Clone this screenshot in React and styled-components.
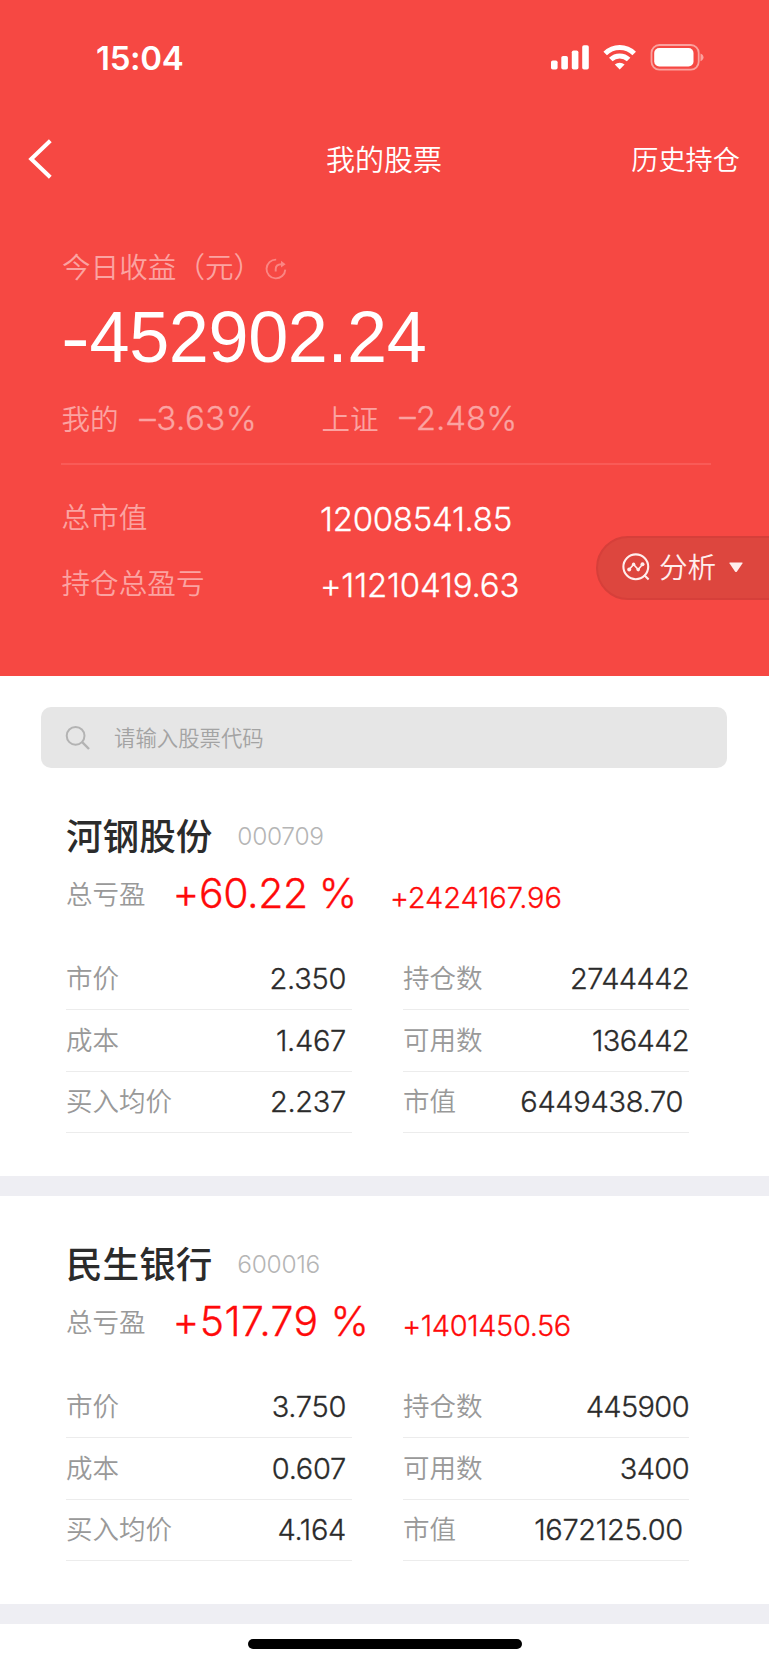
import React from 'react';
import styled, { createGlobalStyle } from 'styled-components';

const GlobalStyle = createGlobalStyle`
  * {
    box-sizing: border-box;
  }
  body {
    margin: 0;
    background: #fff;
    font-family: 'Noto Sans CJK SC', sans-serif;
    font-weight: 350;
  }
`;

const Page = styled.div`
  width: 769px;
  height: 1665px;
  overflow: hidden;
  display: flex;
  flex-direction: column;
  background: #fff;
`;

const Header = styled.header`
  position: relative;
  height: 676px;
  background: #f64843;
  color: #fff;
`;

const StatusBar = styled.div`
  height: 115px;
  padding: 0 64px 0 96px;
  display: flex;
  align-items: center;
  justify-content: space-between;
`;

const Num = styled.span`
  font-family: Inter, sans-serif;
  font-size: ${p => p.$size}px;
  font-weight: ${p => p.$weight || 300};
  letter-spacing: ${p => p.$spacing || 0}px;
  -webkit-text-stroke: ${p => (p.$weight ? 0 : 0.3)}px currentColor;
  white-space: pre;
`;

const NavBar = styled.nav`
  height: 88px;
  padding: 0 29px 0 28px;
  display: grid;
  grid-template-columns: 1fr auto 1fr;
  align-items: center;
`;

const Title = styled.h1`
  margin: -3px 0 0;
  font-size: 29px;
  font-weight: 350;
`;

const HistoryLink = styled.span`
  justify-self: end;
  margin-top: -3px;
  font-size: 27.2px;
`;

const Summary = styled.section`
  padding: 43px 58px 0 61px;
`;

const Caption = styled.div`
  display: flex;
  align-items: center;
  height: 40px;
  padding-left: 1px;
  font-size: 28.6px;
  line-height: 38px;
  color: #fba3a1;

  svg {
    margin: 6px 0 0 3px;
  }
`;

const Today = styled.div`
  margin-top: 11px;
  height: 80px;
  font-family: 'Liberation Sans', sans-serif;
  font-size: 72px;
  font-weight: 400;
  line-height: 80px;
  letter-spacing: -0.4px;
`;

const Minus = styled.span`
  display: inline-block;
  margin-right: 5px;
  transform: scaleX(1.2);
  transform-origin: 0 50%;
`;

const Pair = styled.div`
  display: grid;
  grid-template-columns: 260px 1fr;
`;

const Rate = styled.div`
  display: flex;
  align-items: center;
  height: 40px;
  margin-top: 21px;
  padding-left: 0.5px;
  gap: 20.5px;
  font-size: 28.6px;
  line-height: 38px;
  color: #fba3a1;
`;

const Divider = styled.div`
  height: 2px;
  margin: 25px 0 20px;
  background: #f95b57;
`;

const Total = styled(Pair)`
  height: 66px;
  align-items: center;

  ${Num} {
    margin: 2px 0 0 -1px;
  }
`;

const TotalLabel = styled.span`
  margin: -5px 0 0 0.5px;
  font-size: 28.6px;
  color: #fba3a1;
`;

const AnalyseButton = styled.button`
  position: absolute;
  top: 536px;
  right: -2px;
  width: 175px;
  height: 64px;
  padding: 0 0 0 24px;
  display: flex;
  align-items: center;
  border: 2px solid #d63f3a;
  border-radius: 32px 0 0 32px;
  background: #dd463e;
  color: #ffeeed;
  font: 350 28.6px/58px 'Noto Sans CJK SC', sans-serif;

  svg:first-child {
    margin-top: -2px;
  }

  span {
    margin: -4px 13px 0 9px;
  }

  svg:last-child {
    margin-top: -2px;
  }
`;

const SearchBox = styled.div`
  flex: none;
  display: flex;
  align-items: center;
  height: 61px;
  margin: 31px 42px 0 41px;
  padding: 0 24px;
  border-radius: 10px;
  background: #e6e6e6;
  color: #a3a3a3;
  font-size: 21.4px;
  line-height: 58px;

  span {
    margin: -2px 0 0 24px;
  }
`;

const Stock = styled.section`
  flex: none;
  height: 428px;
  padding: 38px 79px 0 66px;
  border-bottom: 20px solid #eeeef3;
`;

const NameRow = styled.div`
  display: flex;
  align-items: center;
  height: 60px;
  gap: 25px;
  color: #b5b5b5;
`;

const Name = styled.h2`
  margin: -4px 0 0;
  font-size: 36.6px;
  font-weight: 500;
  color: #2b2b2b;
`;

const Label = styled.span`
  font-size: 26.5px;
  color: #999;
`;

const ProfitRow = styled.div`
  display: flex;
  align-items: baseline;
  height: 56px;
  line-height: 54px;
  color: #ff0a0a;

  ${Label} {
    align-self: flex-start;
  }
`;

const Percent = styled(Num)`
  margin: 0 33px 0 27px;
`;

const Facts = styled.div`
  display: grid;
  grid-template-columns: 286px 286px;
  column-gap: 51px;
  margin-top: 26.5px;
`;

const Fact = styled.div`
  display: flex;
  align-items: center;
  justify-content: space-between;
  height: 61.6px;
  padding-right: ${p => p.$end}px;
  border-bottom: 1px solid #ececec;
  color: #2b2b2b;

  ${Label} {
    margin-top: -4px;
  }
`;

const HomeBar = styled.div`
  flex: none;
  width: 274px;
  height: 10px;
  margin: 15px auto 0;
  border-radius: 5px;
  background: #000;
`;

const StatusIcons = () => (
  <svg width="155" height="28" viewBox="0 0 155 28" fill="#fff">
    <rect x="1" y="16.5" width="6.6" height="9" rx="1.8" />
    <rect x="11.3" y="12" width="6.6" height="13.5" rx="1.8" />
    <rect x="21.8" y="6.5" width="6.6" height="19" rx="1.8" />
    <rect x="32.2" y="1.2" width="6.6" height="24.3" rx="1.8" />
    <g fill="none" stroke="#fff" strokeWidth="5">
      <path d="M55.2 9.6 A20.5 20.5 0 0 1 84.2 9.6" />
      <path d="M60.8 15.6 A12.6 12.6 0 0 1 78.6 15.6" />
    </g>
    <path d="M69.7 25.5 L64.8 20.6 A7.3 7.3 0 0 1 74.6 20.6 Z" />
    <rect x="101.5" y="1" width="47.2" height="24.6" rx="7.8" fill="none" stroke="#fba19e" strokeWidth="1.8" />
    <rect x="104.2" y="4.1" width="39.3" height="18.4" rx="5" />
    <path d="M150.5 9.4 Q153.5 10.6 153.5 13.3 Q153.5 16 150.5 17.2 Z" fill="#fba19e" />
  </svg>
);

const BackIcon = () => (
  <svg width="26" height="42" viewBox="0 0 26 42" fill="none" stroke="#fff" strokeWidth="4">
    <path d="M22.3 2.7 L3.2 21 L22.3 39.3" />
  </svg>
);

const RefreshIcon = () => (
  <svg width="22" height="22" viewBox="0 0 22 22" fill="none" stroke="#fa8683" strokeWidth="1.9">
    <path d="M11.2 1.6 A9.4 9.4 0 1 0 20.3 11.6" />
    <path d="M10.7 13.4 V11 C10.7 7.8 12.8 6.3 16.4 6.2" />
    <path d="M16 2.8 L20.6 6.2 L16 9.4 Z" fill="#fa8683" stroke="none" />
  </svg>
);

const AnalyseIcon = () => (
  <svg width="28" height="28" viewBox="0 0 28 28" fill="none" stroke="#ffeeed" strokeWidth="2.1">
    <circle cx="13.8" cy="13.8" r="12.4" />
    <path d="M22.2 22 L26.6 26.4" />
    <path d="M7.2 16.4 L11.6 11.4 L16.2 16.6 L20.4 11.4" strokeWidth="1.6" />
    <g fill="#ffeeed" stroke="none">
      <circle cx="7.2" cy="16.4" r="2" />
      <circle cx="11.6" cy="11.2" r="1.7" />
      <circle cx="16.2" cy="16.6" r="1.8" />
      <circle cx="20.5" cy="11.2" r="2" />
    </g>
  </svg>
);

const CaretIcon = () => (
  <svg width="14" height="11" viewBox="0 0 14 11" fill="#ffeeed">
    <path d="M1 0.5 H13 Q14 0.6 13.4 1.6 L8 9.4 Q7 10.4 6 9.4 L0.6 1.6 Q0 0.6 1 0.5 Z" />
  </svg>
);

const SearchIcon = () => (
  <svg width="25" height="25" viewBox="0 0 25 25" fill="none" stroke="#b3b3b3" strokeWidth="2">
    <circle cx="10.6" cy="10.8" r="8.9" />
    <path d="M17.2 17.2 L24 24" strokeWidth="2.4" />
  </svg>
);

const stocks = [
  {
    name: '河钢股份',
    code: '000709',
    percent: '+60.22 %',
    profit: '+2424167.96',
    spacing: [-0.4, -0.1],
    facts: [
      ['市价', '2.350'],
      ['持仓数', '2744442'],
      ['成本', '1.467'],
      ['可用数', '136442'],
      ['买入均价', '2.237'],
      ['市值', '6449438.70'],
    ],
  },
  {
    name: '民生银行',
    code: '600016',
    percent: '+517.79 %',
    profit: '+1401450.56',
    spacing: [0.4, -0.4],
    facts: [
      ['市价', '3.750'],
      ['持仓数', '445900'],
      ['成本', '0.607'],
      ['可用数', '3400'],
      ['买入均价', '4.164'],
      ['市值', '1672125.00'],
    ],
  },
];

// the right column sits flush, except for the market value
const factEnd = i => (i % 2 === 0 || i === 5 ? 6 : 0);

const StockCard = ({ name, code, percent, profit, spacing, facts }) => (
  <Stock>
    <NameRow>
      <Name>{name}</Name>
      <Num $size={24.5} $weight={300} $spacing={-0.3}>{code}</Num>
    </NameRow>
    <ProfitRow>
      <Label>总亏盈</Label>
      <Percent $size={41} $spacing={spacing[0]}>{percent}</Percent>
      <Num $size={29} $spacing={spacing[1]}>{profit}</Num>
    </ProfitRow>
    <Facts>
      {facts.map(([label, value], i) => (
        <Fact key={label} $end={factEnd(i)}>
          <Label>{label}</Label>
          <Num $size={29} $spacing={value.includes('.') ? -0.3 : -0.6}>{value}</Num>
        </Fact>
      ))}
    </Facts>
  </Stock>
);

const App = () => {
  return (
    <Page>
      <GlobalStyle />
      <Header>
        <StatusBar>
          <Num $size={33} $weight={600} $spacing={-0.3}>15:04</Num>
          <StatusIcons />
        </StatusBar>
        <NavBar>
          <BackIcon />
          <Title>我的股票</Title>
          <HistoryLink>历史持仓</HistoryLink>
        </NavBar>
        <Summary>
          <Caption>
            今日收益（元）
            <RefreshIcon />
          </Caption>
          <Today><Minus>-</Minus>452902.24</Today>
          <Pair>
            <Rate>
              我的<Num $size={33} $spacing={0.5}>–3.63%</Num>
            </Rate>
            <Rate>
              上证<Num $size={33}>–2.48%</Num>
            </Rate>
          </Pair>
          <Divider />
          <Total>
            <TotalLabel>总市值</TotalLabel>
            <Num $size={33} $spacing={-0.3}>12008541.85</Num>
          </Total>
          <Total>
            <TotalLabel>持仓总盈亏</TotalLabel>
            <Num $size={33} $spacing={-0.2}>+11210419.63</Num>
          </Total>
        </Summary>
        <AnalyseButton>
          <AnalyseIcon />
          <span>分析</span>
          <CaretIcon />
        </AnalyseButton>
      </Header>
      <SearchBox>
        <SearchIcon />
        <span>请输入股票代码</span>
      </SearchBox>
      {stocks.map(stock => (
        <StockCard key={stock.code} {...stock} />
      ))}
      <HomeBar />
    </Page>
  );
};

export default App;
